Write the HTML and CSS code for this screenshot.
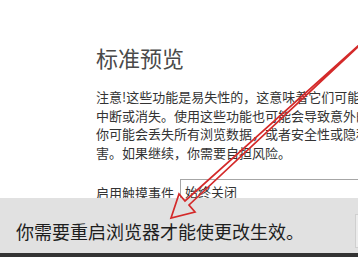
FILE: index.html
```html
<!DOCTYPE html>
<html lang="zh-CN">
<head>
    <meta charset="UTF-8">
    <meta name="viewport" content="width=device-width, initial-scale=1.0">
    <title>标准预览</title>
    <link rel="stylesheet" href="styles.css">
</head>
<body>
    <div class="content">
        <h2 class="title">标准预览</h2>
        <p class="warning">
            注意!这些功能是易失性的，这意味着它们可能会更改、<br>
            中断或消失。使用这些功能也可能会导致意外的浏览器行为。<br>
            你可能会丢失所有浏览数据，或者安全性或隐私可能会受到损<br>
            害。如果继续，你需要自担风险。
        </p>
        <div class="flag-row">
            <label for="touch">启用触摸事件</label>
            <div class="select" id="touch">始终关闭</div>
        </div>
    </div>

    <div class="restart-bar">
        <span class="restart-text">你需要重启浏览器才能使更改生效。</span>
        <button class="restart-btn">立即重启</button>
    </div>

    <!-- annotation arrow drawn over the screenshot -->
    <svg class="arrow" width="358" height="257" viewBox="0 0 358 257">
        <polygon points="378,28 189,205 195,212 171,218 179,194 185,201"
                 fill="none" stroke="#d42a2a" stroke-width="1.7" stroke-linejoin="miter"/>
    </svg>
</body>
</html>
```

FILE: styles.css
```css
body {
    margin: 0;
    font-family: "Noto Sans CJK SC", "Noto Sans", sans-serif;
    background-color: #fff;
    color: #333;
    overflow: hidden;
    height: 257px;
}
.content {
    padding: 42px 0 0 96px;
}
.title {
    margin: 0;
    font-size: 22px;
    line-height: 30px;
    font-weight: normal;
    color: #4a4a4a;
}
.warning {
    margin: 16px 0 0;
    font-size: 13px;
    line-height: 18.5px;
    white-space: nowrap;
    color: #333;
}
.flag-row {
    display: flex;
    align-items: center;
    gap: 6px;
    margin-top: 17px;
    font-size: 13px;
    white-space: nowrap;
}
.select {
    flex: 0 0 300px;
    height: 24px;
    line-height: 24px;
    padding-left: 4px;
    border: 1px solid #a6a6a6;
    color: #333;
}
.restart-bar {
    position: fixed;
    left: 0;
    right: 0;
    bottom: 0;
    height: 45px;
    padding-top: 10px;
    display: flex;
    align-items: center;
    background-color: #e1e1e1;
    border-bottom: 4px solid #333;
    overflow: hidden;
}
.restart-text {
    flex: 0 0 339px;
    padding-left: 16px;
    font-size: 18px;
    color: #1e1e1e;
    white-space: nowrap;
}
.restart-btn {
    flex: 0 0 90px;
    height: 34px;
    border: 1px solid #cfcfcf;
    background-color: #ececec;
    font-family: inherit;
    font-size: 14px;
}
.arrow {
    position: absolute;
    top: 0;
    left: 0;
    pointer-events: none;
}
```
